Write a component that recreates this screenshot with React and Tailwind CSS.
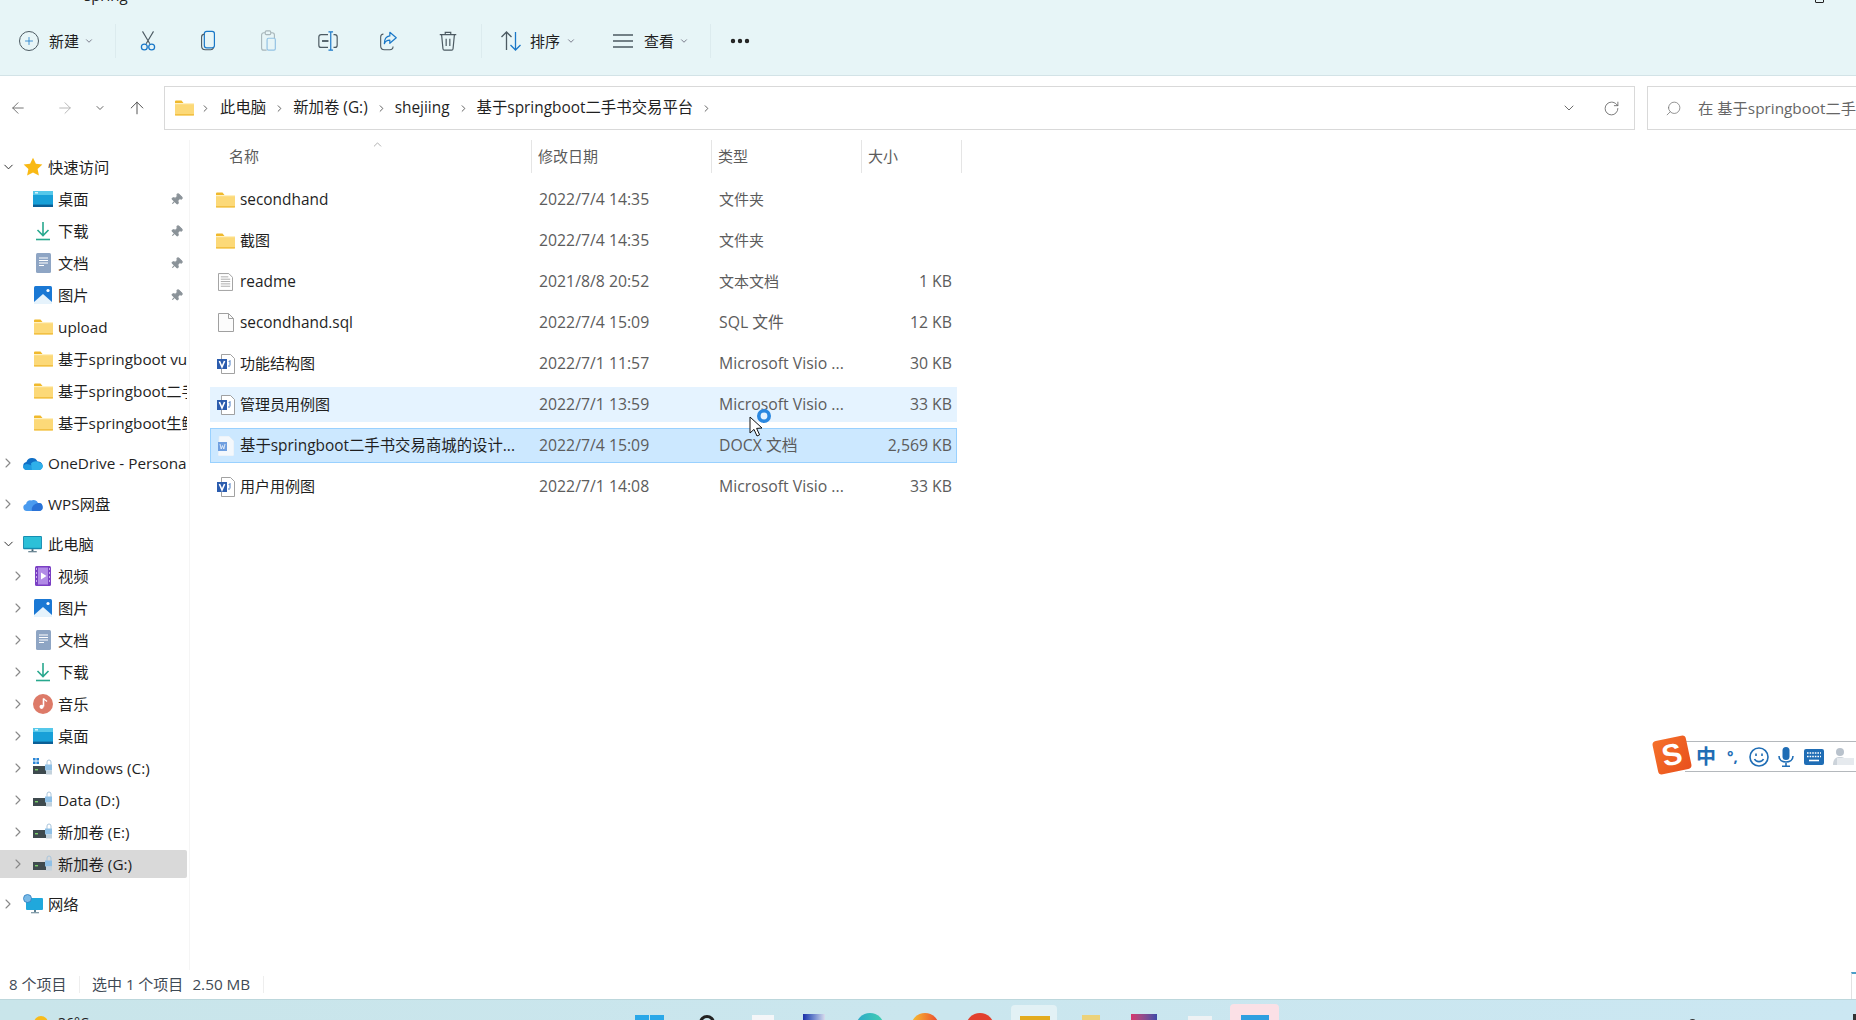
import React from "react";
import { ChevronRight, ChevronDown, ChevronUp, ArrowLeft, ArrowRight, ArrowUp, RotateCw, Search, Pin, Ellipsis, Plus } from "lucide-react";

const font = "font-['Open_Sans','Noto_Sans_CJK_SC',sans-serif]";

// ---- small icon drawings ----
const Folder = ({ className = "w-[19px] h-[16px]" }) => (
  <svg viewBox="0 0 19 16" className={className}>
    <path d="M0 1.5A1 1 0 0 1 1 .5h5.5L8.5 3H0z" fill="#f0b92c" />
    <rect x="0" y="3" width="19" height="12.5" rx="1" fill="#fcd978" />
    <rect x="0" y="3" width="19" height="1.2" fill="#fff0c0" />
    <rect x="0" y="14" width="19" height="1.5" fill="#f2c044" />
  </svg>
);

const Desktop = () => (
  <svg viewBox="0 0 20 16" className="w-5 h-4">
    <rect width="20" height="16" rx="1.5" fill="#18a0d8" />
    <rect width="20" height="4" fill="#55c8ea" />
    <rect y="13.6" width="20" height="2.4" fill="#0b5f96" />
    <rect x="2" y="1" width="3" height="1.5" fill="#d6f3fb" />
  </svg>
);

const Download = () => (
  <svg viewBox="0 0 18 20" className="w-[18px] h-5" fill="none" stroke="#28a88e" strokeWidth="1.6">
    <path d="M9 1v13M3.5 9 9 14.5 14.5 9" />
    <path d="M2 18.5h14" />
  </svg>
);

const Docs = () => (
  <svg viewBox="0 0 15 20" className="w-[15px] h-5">
    <rect width="15" height="20" rx="1.5" fill="#8ea5c4" />
    <path d="M3 5h9M3 7.5h9M3 10h9M3 12.5h5" stroke="#fff" strokeWidth="1" />
  </svg>
);

const Pictures = () => (
  <svg viewBox="0 0 18 18" className="w-[18px] h-[18px]">
    <rect width="18" height="18" rx="1.5" fill="#1a78d4" />
    <path d="M0 16 9 8l9 8v2H0z" fill="#e6f3fc" />
    <circle cx="14" cy="4.5" r="1.6" fill="#fff" />
  </svg>
);

const Video = () => (
  <svg viewBox="0 0 16 20" className="w-4 h-5">
    <rect width="16" height="20" rx="1.5" fill="#7a3fc4" />
    <rect x="3" y="1.5" width="10" height="17" fill="#b18ae6" />
    <path d="M6 6.5v7l5.5-3.5z" fill="#fff" />
    <path d="M1 3h1M1 7h1M1 11h1M1 15h1M14 3h1M14 7h1M14 11h1M14 15h1" stroke="#e2d2f6" strokeWidth="1.4" />
  </svg>
);

const Music = () => (
  <svg viewBox="0 0 20 20" className="w-5 h-5">
    <circle cx="10" cy="10" r="10" fill="#dd7a68" />
    <path d="M10.5 4.5v8" stroke="#fff" strokeWidth="1.6" />
    <path d="M10.5 4.5c1 1.6 2.6 1.8 3.4 3" stroke="#fff" strokeWidth="1.4" fill="none" />
    <circle cx="8.6" cy="12.8" r="2.1" fill="#fff" />
  </svg>
);

const Drive = ({ win }) => (
  <svg viewBox="0 0 20 20" className="w-5 h-5">
    {win && <path d="M0 0h2.6v2.6H0zM3.4 0H6v2.6H3.4zM0 3.4h2.6V6H0zM3.4 3.4H6V6H3.4z" fill="#2a86d6" />}
    <path d="M14 7V4a2 2 0 0 1 4 0v3" fill="none" stroke="#a9c5dc" strokeWidth="1" />
    <rect x="0" y="8" width="13" height="8" fill="#3e4a4e" />
    <rect x="2" y="11" width="3" height="1.4" fill="#7ad06a" />
    <rect x="12" y="6.5" width="7" height="6" fill="#8fc0e6" />
    <rect x="13" y="12.5" width="6" height="4" fill="#c3d2dc" />
  </svg>
);

const Star = () => (
  <svg viewBox="0 0 20 20" className="w-5 h-5">
    <path d="m10 .8 2.9 6 6.5.8-4.8 4.5 1.3 6.5L10 15.4l-5.9 3.2 1.3-6.5L.6 7.6l6.5-.8z" fill="#f9b914" />
  </svg>
);

const OneDrive = () => (
  <svg viewBox="0 0 20 13" className="w-5 h-[13px]">
    <path d="M4 13a4 4 0 0 1-.6-7.9A6 6 0 0 1 14.5 4.5 4.3 4.3 0 0 1 16 13z" fill="#0f6fc6" />
    <path d="M4 13c-2 0-3.8-1-4-3 .5-2 3-4 6-2.5L12 10l3 3z" fill="#1f9be0" />
    <path d="M8 6.5c2-2 5-2.8 7-1.6 2.4.2 4.4 2 5 4.1-.3 2.4-2 4-4 4H9z" fill="#2fb0ea" />
  </svg>
);

const WpsCloud = () => (
  <svg viewBox="0 0 20 13" className="w-5 h-[13px]">
    <path d="M3.8 13a3.6 3.6 0 0 1-.7-7.1 4 4 0 0 1 5-3.4A5 5 0 0 1 15 5a4 4 0 0 1 1.2 8z" fill="#4a9bef" />
    <path d="M9 13c-1-3 1-7 6-8a4 4 0 0 1 1.2 8z" fill="#2a72d6" />
  </svg>
);

const Monitor = () => (
  <svg viewBox="0 0 20 18" className="w-[19px] h-[17px]">
    <rect width="20" height="14" rx="1" fill="#148bb0" />
    <rect x="1" y="1" width="18" height="11.5" fill="#2cc0d8" />
    <path d="M9 14h2v2H9zM5.5 16.2h9v1h-9z" fill="#3f6273" />
  </svg>
);

const NetworkIcon = () => (
  <svg viewBox="0 0 20 20" className="w-5 h-5">
    <rect x="3" y="4" width="17" height="12" rx="1" fill="#20a8dc" />
    <circle cx="4.5" cy="4.5" r="4" fill="#79b9e6" stroke="#2b7cbf" strokeWidth=".8" />
    <path d="M11 16h2v2h-2zM8 18.2h8v1H8z" fill="#5e7f90" />
  </svg>
);

const TxtFile = () => (
  <svg viewBox="0 0 16 19" className="w-[15px] h-[18px]" fill="none">
    <path d="M.5.5h11l4 4v14H.5z" fill="#fff" stroke="#9c9c9c" />
    <path d="M3 4h8M3 6.5h10M3 9h10M3 11.5h10M3 14h10" stroke="#a8a8a8" />
  </svg>
);

const BlankFile = () => (
  <svg viewBox="0 0 16 19" className="w-4 h-[19px]" fill="none">
    <path d="M.5.5h10l5 5v13H.5z" fill="#fcfcfc" stroke="#a0a0a0" />
    <path d="M10.5.5v5h5" stroke="#a0a0a0" />
  </svg>
);

const VisioFile = () => (
  <svg viewBox="0 0 18 20" className="w-[18px] h-5">
    <path d="M4.5.5h9l4 4v15h-13z" fill="#fff" stroke="#8a8a8a" strokeWidth=".8" />
    <rect y="5" width="10" height="10" fill="#2b5cae" />
    <path d="m2.4 7 2.6 6 2.6-6" fill="none" stroke="#fff" strokeWidth="1.6" />
    <path d="M13 6.5v5M13 6.5l-1.3 1.5M11 12h2" stroke="#4a7cc4" strokeWidth="1" fill="none" />
  </svg>
);

const WordFile = () => (
  <svg viewBox="0 0 16 20" className="w-4 h-5">
    <path d="M1 0h10l5 5v14a1 1 0 0 1-1 1H1a1 1 0 0 1-1-1z" fill="#f4f8fc" stroke="#dbe6f0" strokeWidth=".5" />
    <rect y="6" width="9" height="9" fill="#6f9fe0" />
    <path d="m2 8 1.2 5 1.3-3.4L5.8 13 7 8" fill="none" stroke="#e9f1fb" strokeWidth=".9" />
  </svg>
);

// ---- toolbar icons ----
const tbIcon = "w-[22px] h-[22px]";

const CutIcon = () => (
  <svg viewBox="0 0 22 24" className={tbIcon} fill="none">
    <path d="M5 1.5 13 15M17 1.5 9 15" stroke="#4c5a62" strokeWidth="1.2" />
    <circle cx="7" cy="18.5" r="3.2" stroke="#1a78c8" strokeWidth="1.4" />
    <circle cx="15" cy="18.5" r="3.2" stroke="#1a78c8" strokeWidth="1.4" />
  </svg>
);

const CopyIcon = () => (
  <svg viewBox="0 0 22 24" className={tbIcon} fill="none">
    <rect x="7" y="1.5" width="11" height="18" rx="2.5" stroke="#1a78c8" strokeWidth="1.3" />
    <path d="M7 4.5c-1.8.3-3 1.3-3 3v10c0 2.5 1.5 4 4 4h6c1.5 0 2.5-.8 3-2" stroke="#4c5a62" strokeWidth="1.2" />
  </svg>
);

const PasteIcon = () => (
  <svg viewBox="0 0 22 24" className={tbIcon} fill="none" opacity=".4">
    <path d="M8 3H6.5C5 3 4 4 4 5.5v14C4 21 5 22 6.5 22h3" stroke="#4c5a62" strokeWidth="1.2" />
    <path d="M14 3h1.5C17 3 18 4 18 5.5V9" stroke="#4c5a62" strokeWidth="1.2" />
    <rect x="8" y="1" width="6" height="4" rx="1.2" stroke="#4c5a62" strokeWidth="1.2" />
    <rect x="10" y="9" width="9" height="13" rx="1.5" stroke="#1a78c8" strokeWidth="1.3" />
  </svg>
);

const RenameIcon = () => (
  <svg viewBox="0 0 24 24" className={tbIcon} fill="none">
    <path d="M12 5H4.5C3 5 2 6 2 7.5v9C2 18 3 19 4.5 19H12" stroke="#4c5a62" strokeWidth="1.3" />
    <path d="M18 5h1.5C21 5 22 6 22 7.5v9c0 1.5-1 2.5-2.5 2.5H18" stroke="#4c5a62" strokeWidth="1.3" />
    <path d="M5.5 12h7" stroke="#4c5a62" strokeWidth="2" />
    <path d="M15 2v20M12.5 2h5M12.5 22h5" stroke="#1a78c8" strokeWidth="1.3" />
  </svg>
);

const ShareIcon = () => (
  <svg viewBox="0 0 22 24" className={tbIcon} fill="none">
    <path d="M6 4.5C4 4.5 3 5.8 3 7.5v10C3 20 4.5 21.5 7 21.5h6c2 0 3.5-1.5 3.5-3.5" stroke="#4c5a62" strokeWidth="1.2" />
    <path d="M13 2.5 20 8.5l-7 6V11c-3 0-5 1.2-6 4 0-5 2-8 6-8.5z" stroke="#1a78c8" strokeWidth="1.3" strokeLinejoin="round" />
  </svg>
);

const TrashIcon = () => (
  <svg viewBox="0 0 22 24" className={tbIcon} fill="none" stroke="#4c5a62" strokeWidth="1.3">
    <path d="M2 5h18M8 5V2.5h6V5" />
    <path d="M4 5l1.5 15.5c.1 1 .8 1.5 1.5 1.5h8c.7 0 1.4-.5 1.5-1.5L18 5" />
    <path d="M9 9.5v8M13 9.5v8" />
  </svg>
);

const SortIcon = () => (
  <svg viewBox="0 0 22 22" className={tbIcon} fill="none" strokeWidth="1.3">
    <path d="M6.5 20V2M1.5 7l5-5 5 5" stroke="#4c5a62" />
    <path d="M15.5 2v18M10.5 15l5 5 5-5" stroke="#1a78c8" />
  </svg>
);

const ViewIcon = () => (
  <svg viewBox="0 0 22 22" className={tbIcon} fill="none" stroke="#4c5a62" strokeWidth="1.4">
    <path d="M1 5h20M1 11h20M1 17h20" />
  </svg>
);

const Sep = () => <div className="w-px h-[34px] bg-[#dcebee]" />;

const ToolBtn = ({ children }) => (
  <div className="w-[60px] flex justify-center items-center">{children}</div>
);

const Toolbar = () => (
  <div className="relative h-[76px] shrink-0 bg-[#e7f5f7] border-b border-[#d3e3e7] flex items-center pt-[7px] text-[#1f1f1f] text-[15px]">
    <div className="absolute top-[-16px] left-[84px] text-[15px] text-[#222]">spring</div>
    <div className="absolute top-[-6px] right-[32px] w-[9px] h-[9px] border border-[#222] rounded-[1px]" />
    <div className="w-[115px] flex items-center pl-[19px]">
      <div className="w-5 h-5 rounded-full border border-[#4c5a62] flex items-center justify-center">
        <Plus className="w-3 h-3 text-[#1a78c8]" strokeWidth={1.6} />
      </div>
      <span className="ml-[10px]">新建</span>
      <ChevronDown className="ml-[5px] w-[10px] h-[10px] text-[#667]" />
    </div>
    <Sep />
    <div className="flex items-center pl-[2px]">
      <ToolBtn><CutIcon /></ToolBtn>
      <ToolBtn><CopyIcon /></ToolBtn>
      <ToolBtn><PasteIcon /></ToolBtn>
      <ToolBtn><RenameIcon /></ToolBtn>
      <ToolBtn><ShareIcon /></ToolBtn>
      <ToolBtn><TrashIcon /></ToolBtn>
    </div>
    <div className="ml-[3px]"><Sep /></div>
    <div className="flex items-center pl-[18px] w-[130px]">
      <SortIcon />
      <span className="ml-[8px]">排序</span>
      <ChevronDown className="ml-[6px] w-[10px] h-[10px] text-[#667]" />
    </div>
    <div className="flex items-center w-[98px]">
      <ViewIcon />
      <span className="ml-[10px]">查看</span>
      <ChevronDown className="ml-[5px] w-[10px] h-[10px] text-[#667]" />
    </div>
    <Sep />
    <Ellipsis className="ml-[17px] w-6 h-6 text-[#222]" strokeWidth={2.4} />
  </div>
);

const Crumb = ({ children }) => (
  <>
    <span>{children}</span>
    <ChevronRight className="w-[11px] h-[11px] mx-[8px] text-[#555]" />
  </>
);

const AddressBar = () => (
  <div className="h-[64px] shrink-0 flex items-center overflow-hidden">
    <div className="w-[164px] shrink-0 flex items-center text-[#555]">
      <ArrowLeft className="ml-[9px] w-[18px] h-[18px] text-[#666]" strokeWidth={1.2} />
      <ArrowRight className="ml-[29px] w-[18px] h-[18px] text-[#b0b0b0]" strokeWidth={1.2} />
      <ChevronDown className="ml-[20px] w-[12px] h-[12px] text-[#666]" />
      <ArrowUp className="ml-[21px] w-5 h-5 text-[#555]" strokeWidth={1.2} />
    </div>
    <div className="w-[1471px] shrink-0 h-[44px] border border-[#d9d9d9] bg-white flex items-center text-[15.4px] text-[#1f1f1f]">
      <div className="ml-[10px]"><Folder /></div>
      <ChevronRight className="w-[11px] h-[11px] ml-[6px] mr-[9px] text-[#555]" />
      <Crumb>此电脑</Crumb>
      <Crumb>新加卷 (G:)</Crumb>
      <Crumb>shejiing</Crumb>
      <Crumb>基于springboot二手书交易平台</Crumb>
      <ChevronDown className="ml-auto w-[16px] h-[16px] text-[#555]" strokeWidth={1.3} />
      <RotateCw className="ml-[26px] mr-[14px] w-[17px] h-[17px] text-[#666]" strokeWidth={1.2} />
    </div>
    <div className="ml-3 w-[240px] shrink-0 h-[44px] border border-[#d9d9d9] bg-white flex items-center text-[15.3px] text-[#666] whitespace-nowrap overflow-hidden">
      <Search className="shrink-0 ml-[17px] w-[17px] h-[17px] -scale-x-100 text-[#777]" strokeWidth={1.1} />
      <span className="ml-[16px]">在 基于springboot二手书交易平台</span>
    </div>
  </div>
);

const NavRow = ({ icon, label, pinned, expand, depth = 1, active }) => (
  <div className="h-8 flex items-center">
    <div className={`w-[187px] h-7 flex items-center overflow-hidden whitespace-nowrap ${active ? "bg-[#d9d9d9] rounded-r-[2px]" : ""}`}>
      <div className={`shrink-0 flex justify-center ${depth === 0 ? "w-[16px]" : "w-[36px]"}`}>
        {expand === "open" && <ChevronDown className="w-4 h-4 text-[#333] ml-[1px]" strokeWidth={1.6} />}
        {expand === "closed" && <ChevronRight className="w-4 h-4 text-[#888]" strokeWidth={1.6} />}
      </div>
      <div className={`shrink-0 flex justify-center ${depth === 0 ? "w-[31px] ml-[1px]" : "w-[22px] ml-[-4px]"}`}>{icon}</div>
      <span className={`${depth === 0 ? "ml-[0px]" : "ml-[4px]"} flex-1 overflow-hidden`}>{label}</span>
      {pinned && <Pin className="w-[13px] h-[13px] mr-[4px] rotate-45 text-[#8a9298] fill-[#8a9298]" />}
    </div>
  </div>
);

const Sidebar = () => (
  <div className="w-[190px] shrink-0 border-r border-[#f5f5f5] pt-[11px] text-[15.3px] text-[#1f1f1f]">
    <NavRow depth={0} expand="open" icon={<Star />} label="快速访问" />
    <NavRow icon={<Desktop />} label="桌面" pinned />
    <NavRow icon={<Download />} label="下载" pinned />
    <NavRow icon={<Docs />} label="文档" pinned />
    <NavRow icon={<Pictures />} label="图片" pinned />
    <NavRow icon={<Folder />} label="upload" />
    <NavRow icon={<Folder />} label="基于springboot vue" />
    <NavRow icon={<Folder />} label="基于springboot二手书" />
    <NavRow icon={<Folder />} label="基于springboot生鲜" />
    <div className="mt-2">
      <NavRow depth={0} expand="closed" icon={<OneDrive />} label="OneDrive - Personal" />
    </div>
    <div className="mt-[9px]">
      <NavRow depth={0} expand="closed" icon={<WpsCloud />} label="WPS网盘" />
    </div>
    <div className="mt-2">
      <NavRow depth={0} expand="open" icon={<Monitor />} label="此电脑" />
    </div>
    <NavRow expand="closed" icon={<Video />} label="视频" />
    <NavRow expand="closed" icon={<Pictures />} label="图片" />
    <NavRow expand="closed" icon={<Docs />} label="文档" />
    <NavRow expand="closed" icon={<Download />} label="下载" />
    <NavRow expand="closed" icon={<Music />} label="音乐" />
    <NavRow expand="closed" icon={<Desktop />} label="桌面" />
    <NavRow expand="closed" icon={<Drive win />} label="Windows (C:)" />
    <NavRow expand="closed" icon={<Drive />} label="Data (D:)" />
    <NavRow expand="closed" icon={<Drive />} label="新加卷 (E:)" />
    <NavRow expand="closed" icon={<Drive />} label="新加卷 (G:)" active />
    <div className="mt-2">
      <NavRow depth={0} expand="closed" icon={<NetworkIcon />} label="网络" />
    </div>
  </div>
);

// cjk marks names that are all chinese, those sit a bit smaller than latin text in the reference
const files = [
  { name: "secondhand", date: "2022/7/4 14:35", type: "文件夹", size: "", icon: <Folder /> },
  { name: "截图", cjk: true, date: "2022/7/4 14:35", type: "文件夹", size: "", icon: <Folder /> },
  { name: "readme", date: "2021/8/8 20:52", type: "文本文档", size: "1 KB", icon: <TxtFile /> },
  { name: "secondhand.sql", date: "2022/7/4 15:09", type: "SQL 文件", size: "12 KB", icon: <BlankFile /> },
  { name: "功能结构图", cjk: true, date: "2022/7/1 11:57", type: "Microsoft Visio ...", size: "30 KB", icon: <VisioFile /> },
  { name: "管理员用例图", cjk: true, date: "2022/7/1 13:59", type: "Microsoft Visio ...", size: "33 KB", icon: <VisioFile />, state: "hover" },
  { name: "基于springboot二手书交易商城的设计...", date: "2022/7/4 15:09", type: "DOCX 文档", size: "2,569 KB", icon: <WordFile />, state: "selected" },
  { name: "用户用例图", cjk: true, date: "2022/7/1 14:08", type: "Microsoft Visio ...", size: "33 KB", icon: <VisioFile /> },
];

const FileRow = ({ file }) => (
  <div className="h-[41px] flex items-center">
    <div
      className={`w-[747px] h-[35px] flex items-center border ${
        file.state === "hover"
          ? "bg-[#e5f3ff] border-[#e5f3ff]"
          : file.state === "selected"
          ? "bg-[#cce8ff] border-[#99d1ff]"
          : "border-transparent"
      }`}
    >
      <div className="w-[29px] shrink-0 flex justify-center">{file.icon}</div>
      <div className={`w-[299px] shrink-0 text-[#1f1f1f] whitespace-nowrap ${file.cjk ? "text-[15px]" : "text-[15.4px]"}`}>{file.name}</div>
      <div className="w-[180px] shrink-0 text-[#5c5c5c]">{file.date}</div>
      <div className={`w-[150px] shrink-0 text-[#5c5c5c] ${file.type.startsWith("文") ? "text-[15px]" : ""}`}>{file.type}</div>
      <div className="w-[83px] shrink-0 text-right text-[#5c5c5c]">{file.size}</div>
    </div>
  </div>
);

const HeaderCell = ({ width, children }) => (
  <div className={`h-[33px] flex items-center border-r border-[#e5e5e5] pl-[6px] ${width}`}>
    {children}
  </div>
);

const FileList = () => (
  <div className="flex-1 pl-[20px] text-[15.8px]">
    <div className="flex text-[#5c5c5c] text-[15px]">
      <div className="w-[322px]">
        <div className="relative pl-[19px] h-[33px] flex items-center border-r border-[#e5e5e5]">
          名称
          <ChevronUp className="absolute top-[-2px] left-[161px] w-[13px] h-[13px] text-[#888]" strokeWidth={1.2} />
        </div>
      </div>
      <HeaderCell width="w-[180px]">修改日期</HeaderCell>
      <HeaderCell width="w-[150px]">类型</HeaderCell>
      <HeaderCell width="w-[100px]">大小</HeaderCell>
    </div>
    <div className="pt-[6px]">
      {files.map((f) => (
        <FileRow key={f.name} file={f} />
      ))}
    </div>
  </div>
);

const StatusBar = () => (
  <div className="relative h-[29px] shrink-0 flex items-center text-[15px] text-[#3f4a55]">
    <div className="w-[80px] pl-[9px] border-r border-[#eee] h-[17px] flex items-center whitespace-nowrap">8 个项目</div>
    <div className="pl-[12px] w-[184px] border-r border-[#eee] h-[17px] flex items-center whitespace-nowrap">
      选中 1 个项目<span className="ml-[9px] text-[15.3px]">2.50 MB</span>
    </div>
    <div className="ml-auto self-end w-[5px] h-[27px] border-t-2 border-l border-t-[#4a9fc8] border-l-[#e2e2e2]" />
  </div>
);

const Taskbar = () => (
  <div className="relative h-[21px] shrink-0 bg-gradient-to-r from-[#c9e5ea] to-[#cbe7f2] border-t border-[#bcd7dc] overflow-hidden">
    <div className="absolute left-[34px] top-[16px] w-[14px] h-[14px] rounded-full bg-[#f7bb1c]" />
    <div className="absolute left-[58px] top-[12px] text-[14px] text-[#222]">36°C</div>
    <div className="absolute left-[635px] top-[15px] w-[29px] h-[29px] bg-[#2aa8e8] flex justify-center">
      <div className="w-px h-full bg-[#c9e5ea]" />
    </div>
    <div className="absolute left-[699px] top-[15px] w-[16px] h-[16px] rounded-full border-[3px] border-[#222]" />
    <div className="absolute left-[752px] top-[15px] w-[22px] h-[22px] bg-[#f4f6f8]" />
    <div className="absolute left-[803px] top-[14px] w-[22px] h-[22px] bg-gradient-to-r from-[#1c2ca8] to-[#d8dcec]" />
    <div className="absolute left-[856px] top-[13px] w-[28px] h-[28px] rounded-full bg-gradient-to-r from-[#2fa8c8] to-[#42d0b0]" />
    <div className="absolute left-[911px] top-[13px] w-[28px] h-[28px] rounded-full bg-gradient-to-r from-[#f5c030] to-[#e8402e]" />
    <div className="absolute left-[966px] top-[13px] w-[28px] h-[28px] rounded-full bg-[#e2402e]" />
    <div className="absolute left-[1011px] top-[5px] w-[46px] h-[30px] rounded-t-[4px] bg-[#e2f1f5]" />
    <div className="absolute left-[1020px] top-[16px] w-[30px] h-[20px] bg-[#e3ab1e]" />
    <div className="absolute left-[1082px] top-[15px] w-[18px] h-[20px] bg-[#ecd27a]" />
    <div className="absolute left-[1131px] top-[14px] w-[26px] h-[20px] bg-gradient-to-r from-[#d6336c] to-[#3c48a8]" />
    <div className="absolute left-[1188px] top-[16px] w-[24px] h-[20px] bg-[#eef2f4]" />
    <div className="absolute left-[1230px] top-[4px] w-[49px] h-[30px] rounded-t-[4px] bg-[#fbe0e6]" />
    <div className="absolute left-[1241px] top-[15px] w-[28px] h-[28px] bg-[#2f9fe0]" />
    <div className="absolute left-[1689px] top-[19px] w-[7px] h-[7px] rounded-full bg-[#333]" />
    <div className="absolute left-[1853px] top-[14px] w-[3px] h-[7px] bg-[#333]" />
  </div>
);

// sogou input method bar, floats over the window
const ImeBar = () => (
  <div className="absolute left-[1655px] top-[738px] flex items-center">
    <div className="relative z-10 w-[34px] h-[34px] rotate-[-12deg] rounded-[4px] bg-gradient-to-br from-[#f5702a] to-[#e8501c] flex items-center justify-center text-white text-[30px] font-bold leading-none font-['Liberation_Sans',sans-serif]">
      S
    </div>
    <div className="ml-[-4px] mt-[3px] w-[171px] h-[31px] bg-white border-y border-[#b4b8bc] flex items-center text-[#1f6db5] overflow-hidden">
      <span className="ml-[11px] text-[20px] font-bold leading-none">中</span>
      <span className="ml-[11px] text-[15px] font-bold leading-none">°,</span>
      <svg viewBox="0 0 20 20" className="ml-[11px] w-5 h-5 shrink-0" fill="none" stroke="#1f6db5" strokeWidth="1.6">
        <circle cx="10" cy="10" r="9" />
        <path d="M7 6.5v2.5M13 6.5v2.5M5.5 12c1.5 3.5 7.5 3.5 9 0" />
      </svg>
      <svg viewBox="0 0 16 20" className="ml-[9px] w-4 h-5 shrink-0" fill="none">
        <rect x="4.5" y="0" width="7" height="13" rx="3.5" fill="#1f6db5" />
        <path d="M1 9c0 8 14 8 14 0M8 16v3M4 19.4h8" stroke="#1f6db5" strokeWidth="1.6" />
      </svg>
      <svg viewBox="0 0 20 16" className="ml-[10px] w-5 h-4 shrink-0">
        <rect width="20" height="16" rx="2" fill="#1f6db5" />
        <path d="M3 4h14M3 7.5h14" stroke="#fff" strokeWidth="1.6" strokeDasharray="1.6 1" />
        <path d="M5 11.5h10" stroke="#fff" strokeWidth="1.6" />
      </svg>
      <svg viewBox="0 0 22 20" className="ml-[8px] w-[22px] h-5 shrink-0">
        <circle cx="8" cy="5" r="4" fill="#b9c2cc" />
        <path d="M1 18c0-6 3-8 7-8s7 2 7 8z" fill="#ccd3da" />
        <rect x="5" y="11" width="17" height="7" fill="#e6eaee" />
      </svg>
    </div>
  </div>
);

const BusyCursor = () => (
  <div className="absolute left-[749px] top-[408px]">
    <svg viewBox="0 0 30 30" className="w-[30px] h-[30px]">
      <path d="M1 9v16l4-3.6 3 6.6 2.6-1.2-3-6.4 5.4-.4z" fill="#fff" stroke="#111" strokeWidth="1" />
      <circle cx="15" cy="8" r="5.2" fill="none" stroke="#2b88e0" strokeWidth="3.6" />
    </svg>
  </div>
);

export default function App() {
  return (
    <div className={`relative w-[1856px] h-[1020px] overflow-hidden flex flex-col bg-white ${font}`}>
      <Toolbar />
      <AddressBar />
      <div className="flex flex-1 min-h-0">
        <Sidebar />
        <FileList />
      </div>
      <StatusBar />
      <Taskbar />
      <ImeBar />
      <BusyCursor />
    </div>
  );
}
